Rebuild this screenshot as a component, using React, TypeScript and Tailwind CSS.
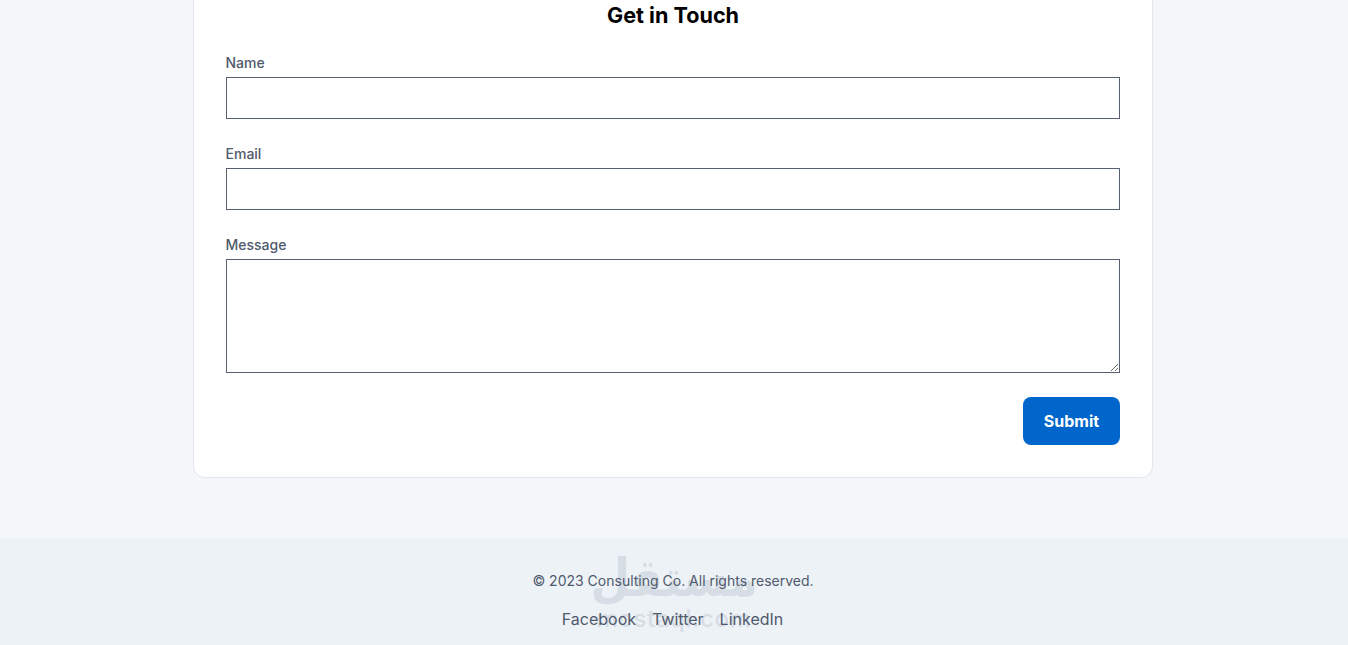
const inter = "font-['Inter',sans-serif]"

function Field({ label, children, className }: { label: string; children: React.ReactNode; className: string }) {
  return (
    <div className={className}>
      <label className="mb-1 -ml-[0.5px] block text-sm leading-5 font-medium text-[#4f5a6c]">{label}</label>
      {children}
    </div>
  )
}

export default function App() {
  return (
    <div className={`${inter} flex h-[645px] flex-col overflow-hidden bg-[#f4f6f8]`}>
      <main className="flex justify-center pr-0.5 pb-[60px]">
        <form className="-mt-px flex h-[479px] w-[960px] flex-col rounded-b-xl border-x border-b border-[#e2e8f0] bg-white px-8 pb-8">
          <h2 className="mb-[22px] text-center text-[21.6px] leading-8 font-bold text-black">Get in Touch</h2>
          <Field label="Name" className="mb-[25px]">
            <input type="text" className="block h-[42px] w-full border border-[#566072] bg-white" />
          </Field>
          <Field label="Email" className="mb-[25px]">
            <input type="email" className="block h-[42px] w-full border border-[#566072] bg-white" />
          </Field>
          <Field label="Message" className="mb-6">
            <textarea className="block h-[114px] w-full border border-[#566072] bg-white" />
          </Field>
          <div className="flex justify-end">
            <button type="button" className="h-12 w-[97px] rounded-lg bg-[#0066cc] text-base font-bold text-white">
              Submit
            </button>
          </div>
        </form>
      </main>
      <footer className="relative flex flex-1 flex-col items-center bg-[#edf2f7] pt-8 pr-0.5 text-[#4f5a6c]">
        {/* mostaql watermark, sits behind the footer text */}
        <div className="pointer-events-none absolute top-[7px] left-[592px] flex w-[164px] flex-col items-center text-[#d6dde4]">
          <span dir="rtl" className="scale-x-[0.88] font-['DejaVu_Sans',sans-serif] text-[52px] leading-[66px] font-bold">مستقل</span>
          <span className="-mt-[6px] text-2xl leading-7 font-medium tracking-wide">mostaql.com</span>
        </div>
        <p className="relative text-sm leading-[22px]">© 2023 Consulting Co. All rights reserved.</p>
        <nav className="relative mt-[15px] -ml-px flex gap-4 text-base leading-6">
          <a href="#">Facebook</a>
          <a href="#">Twitter</a>
          <a href="#">LinkedIn</a>
        </nav>
      </footer>
    </div>
  )
}
